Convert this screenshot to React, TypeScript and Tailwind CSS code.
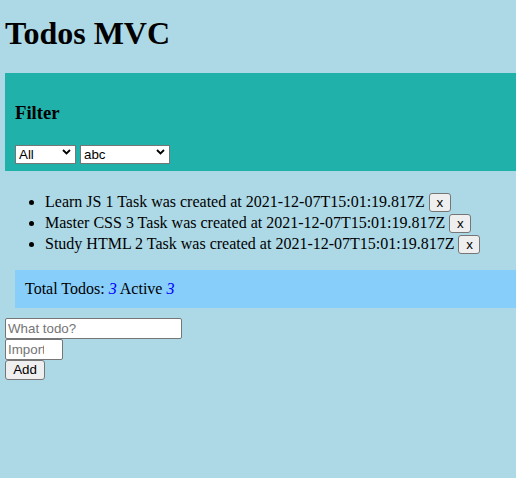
const todos = [
  { title: "Learn JS", priority: 1 },
  { title: "Master CSS", priority: 3 },
  { title: "Study HTML", priority: 2 },
];

const created = "2021-12-07T15:01:19.817Z";

function Select({ value, width }: { value: string; width: string }) {
  return (
    <div className={`relative ${width} h-[19px]`}>
      <select
        defaultValue={value}
        className="appearance-none w-full h-full bg-white border border-[#767676] pl-[3px] text-[13.33px] leading-[15px] font-['Liberation_Sans',Arial,sans-serif] text-black outline-none"
      >
        <option>{value}</option>
      </select>
      <svg
        className="absolute right-[5px] top-[7px] pointer-events-none"
        width="9"
        height="6"
        viewBox="0 0 9 6"
      >
        <path d="M1 1l3.5 3.5L8 1" fill="none" stroke="#000" strokeWidth="1.8" />
      </svg>
    </div>
  );
}

export default function App() {
  return (
    <div className="min-h-screen bg-[#add8e6] px-[5px] pt-px text-black font-['Liberation_Serif','Times_New_Roman',serif] text-[16px]">
      <h1 className="mt-[14px] mb-[21px] text-[32px] leading-[37px] font-bold">Todos MVC</h1>

      {/* Filter panel */}
      <section className="bg-[#20b2aa] p-[10px] -mr-[5px]">
        <h3 className="my-[18.72px] text-[18.72px] leading-[21.5px] font-bold">Filter</h3>
        <div className="flex gap-[4px]">
          <Select value="All" width="w-[61px]" />
          <Select value="abc" width="w-[90px]" />
        </div>
      </section>

      {/* Todo list */}
      <ul className="list-disc pl-[40px] mt-[20px] mb-[16px] leading-[21px]">
        {todos.map((t) => (
          <li key={t.title}>
            {t.title} {t.priority} Task was created at {created}{" "}
            <button className="inline-block align-baseline w-[22px] h-[19px] bg-[#efefef] border border-[#767676] rounded-[3px] text-[13.33px] leading-[15px] font-['Liberation_Sans',Arial,sans-serif]">
              x
            </button>
          </li>
        ))}
      </ul>

      {/* Stats */}
      <div className="ml-[10px] -mr-[5px] mb-[10.5px] bg-[#87cefa] p-[10px] leading-[18px]">
        Total Todos: <i className="text-[#0000ff]">3</i> Active <i className="text-[#0000ff]">3</i>
      </div>

      {/* Add form */}
      <div className="flex flex-col items-start font-['Liberation_Sans',Arial,sans-serif] text-[13.33px]">
        <input
          placeholder="What todo?"
          className="w-[177px] h-[21px] bg-white border border-[#767676] rounded-[2px] px-[2px] placeholder:text-[#757575] outline-none"
        />
        <input
          placeholder="Import"
          className="w-[58px] h-[21px] bg-white border border-[#767676] rounded-[2px] pl-[2px] pr-[18px] placeholder:text-[#757575] outline-none"
        />
        <button className="w-[40px] h-[20px] bg-[#efefef] border border-[#767676] rounded-[3px] leading-[16px] text-[13.33px]">
          Add
        </button>
      </div>
    </div>
  );
}
